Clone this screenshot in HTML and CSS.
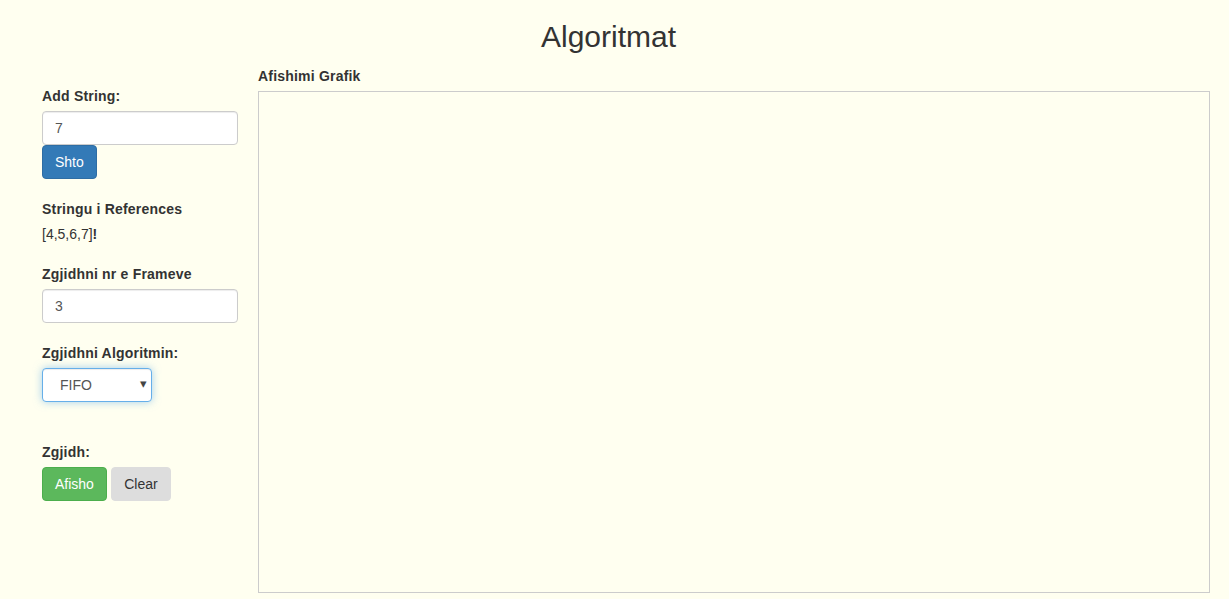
FILE: index.html
```html
<!DOCTYPE html>
<html>
<head>
<meta charset="utf-8">
<link rel="stylesheet" href="styles.css">
</head>
<body>
<h2 class="title">Algoritmat</h2>
<div class="main">
  <div class="sidebar">
    <label class="lbl">Add String:</label>
    <input class="field" type="text" value="7">
    <div class="btn-row"><button class="btn btn-primary">Shto</button></div>

    <label class="lbl gap20">Stringu i References</label>
    <div class="refs">[4,5,6,7]<b>!</b></div>

    <label class="lbl gap20">Zgjidhni nr e Frameve</label>
    <input class="field" type="text" value="3">

    <label class="lbl gap20">Zgjidhni Algoritmin:</label>
    <div class="select-wrap">
      <select class="select"><option>FIFO</option><option>LRU</option><option>OPT</option></select>
      <span class="caret">▾</span>
    </div>

    <label class="lbl gap40">Zgjidh:</label>
    <div class="btn-row">
      <button class="btn btn-success">Afisho</button>
      <button class="btn btn-default">Clear</button>
    </div>
  </div>
  <div class="content">
    <label class="lbl">Afishimi Grafik</label>
    <div class="canvas"></div>
  </div>
</div>
</body>
</html>
```

FILE: styles.css
```css
* { box-sizing: border-box; }
html, body { margin: 0; padding: 0; }
body {
  background: #fffff0;
  font-family: "Liberation Sans", Arial, Helvetica, sans-serif;
  font-size: 14px;
  line-height: 20px;
  color: #333;
  overflow: hidden;
}
.title {
  margin: 20px 0 10px;
  padding-right: 12px;
  font-size: 30px;
  line-height: 33px;
  font-weight: 500;
  text-align: center;
  color: #333;
}
.main {
  display: flex;
  gap: 20px;
  padding-left: 42px;
  padding-top: 3px;
}
.sidebar {
  width: 196px;
  display: flex;
  flex-direction: column;
  align-items: flex-start;
  padding-top: 20px;
}
.lbl {
  display: block;
  font-weight: bold;
  font-size: 14px;
  line-height: 20px;
  margin-bottom: 5px;
  letter-spacing: 0.2px;
}
.gap20 { margin-top: 20px; }
.gap40 { margin-top: 40px; }
.field {
  width: 196px;
  height: 34px;
  padding: 6px 12px;
  font-family: inherit;
  font-size: 14px;
  color: #555;
  background: #fff;
  border: 1px solid #ccc;
  border-radius: 4px;
  box-shadow: inset 0 1px 1px rgba(0,0,0,.075);
  outline: none;
}
.btn-row { display: flex; gap: 4px; }
.btn {
  height: 34px;
  padding: 6px 12px;
  font-family: inherit;
  font-size: 14px;
  line-height: 20px;
  border: 1px solid transparent;
  border-radius: 4px;
  cursor: pointer;
}
.btn-primary { background: #337ab7; border-color: #2e6da4; color: #fff; }
.btn-success { background: #5cb85c; border-color: #4cae4c; color: #fff; }
.btn-default { background: #ddd; border-color: #ddd; color: #333; width: 60px; }
.refs { line-height: 20px; }
.select-wrap { position: relative; width: 110px; }
.select {
  -webkit-appearance: none;
  appearance: none;
  width: 110px;
  height: 34px;
  padding: 6px 12px 6px 17px;
  font-family: inherit;
  font-size: 14px;
  color: #555;
  background: #fff;
  border: 1px solid #66afe9;
  border-radius: 4px;
  box-shadow: inset 0 1px 1px rgba(0,0,0,.075), 0 0 8px rgba(102,175,233,.6);
  outline: none;
}
.caret {
  position: absolute;
  right: 5px;
  top: 6px;
  font-size: 13px;
  color: #444;
  pointer-events: none;
}
.content {
  width: 952px;
  display: flex;
  flex-direction: column;
}
.canvas {
  height: 502px;
  border: 1px solid #ccc;
}
```
